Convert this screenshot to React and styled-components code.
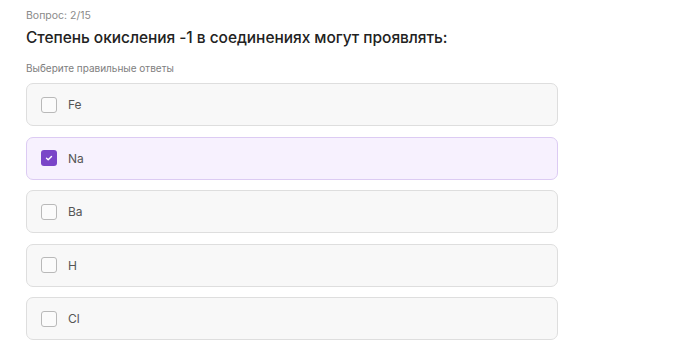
import React from "react";
import styled, { createGlobalStyle } from "styled-components";

const Global = createGlobalStyle`
  html, body { margin: 0; padding: 0; background: #ffffff; }
  body { font-family: Inter, "Noto Sans", sans-serif; }
`;

const Page = styled.div`
  padding: 9px 118px 0 26px;
  display: flex;
  flex-direction: column;
`;

const Counter = styled.div`
  font-size: 10.5px;
  color: #8a8a8a;
  line-height: 14px;
`;

const Title = styled.h1`
  margin: 4px 0 0;
  font-size: 15.5px;
  font-weight: 500;
  color: #222;
  line-height: 21px;
  letter-spacing: -0.05px;
`;

const Hint = styled.div`
  margin-top: 13px;
  font-size: 10px;
  color: #7e7e7e;
  line-height: 14px;
`;

const List = styled.div`
  margin-top: 8px;
  display: flex;
  flex-direction: column;
  gap: 10.6px;
`;

const Option = styled.label`
  box-sizing: border-box;
  height: 43px;
  display: flex;
  align-items: center;
  gap: 11px;
  padding: 0 14px;
  border-radius: 7px;
  border: 1px solid ${(p) => (p.$checked ? "#dccbf3" : "#dedede")};
  background: ${(p) => (p.$checked ? "#f7f1fe" : "#f8f8f8")};
`;

const Box = styled.span`
  box-sizing: border-box;
  width: 16px;
  height: 16px;
  border-radius: 3px;
  display: flex;
  align-items: center;
  justify-content: center;
  border: ${(p) => (p.$checked ? "none" : "1px solid #b9b9b9")};
  background: ${(p) => (p.$checked ? "#7a45c8" : "#fbfbfb")};
`;

const Label = styled.span`
  font-size: 12px;
  color: #555555;
`;

const options = [
  { text: "Fe", checked: false },
  { text: "Na", checked: true },
  { text: "Ba", checked: false },
  { text: "H", checked: false },
  { text: "Cl", checked: false },
];

export default function App() {
  return (
    <>
      <Global />
      <Page>
        <Counter>Вопрос: 2/15</Counter>
        <Title>Степень окисления -1 в соединениях могут проявлять:</Title>
        <Hint>Выберите правильные ответы</Hint>
        <List>
          {options.map((o) => (
            <Option key={o.text} $checked={o.checked}>
              <Box $checked={o.checked}>
                {o.checked && (
                  <svg width="10" height="10" viewBox="0 0 10 10">
                    <path d="M2.5 5.2 L4.2 6.8 L7.5 3.4" fill="none" stroke="#fff" strokeWidth="1.4" strokeLinecap="round" strokeLinejoin="round" />
                  </svg>
                )}
              </Box>
              <Label>{o.text}</Label>
            </Option>
          ))}
        </List>
      </Page>
    </>
  );
}
